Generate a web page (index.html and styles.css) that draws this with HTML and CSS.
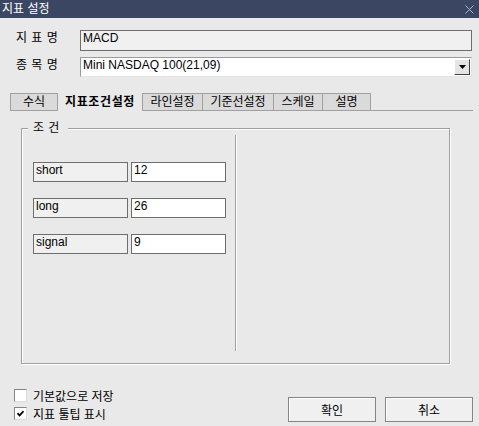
FILE: index.html
```html
<!DOCTYPE html>
<html lang="ko">
<head>
    <meta charset="UTF-8">
    <meta name="viewport" content="width=device-width, initial-scale=1.0">
    <title>지표 설정</title>
    <link rel="stylesheet" href="styles.css">
</head>
<body>
    <div class="dialog">
        <div class="titlebar">
            <span class="title">지표 설정</span>
            <svg class="close" width="9" height="9" viewBox="0 0 9 9">
                <path d="M0.5 0.5 L8.5 8.5 M8.5 0.5 L0.5 8.5" stroke="#aeb6c6" stroke-width="1" fill="none"/>
            </svg>
        </div>

        <div class="field-row first">
            <span class="field-label">지 표 명</span>
            <div class="field-box readonly">MACD</div>
        </div>
        <div class="field-row">
            <span class="field-label">종 목 명</span>
            <div class="field-box select">
                <span>Mini NASDAQ 100(21,09)</span>
                <span class="drop-btn">
                    <svg width="7" height="4" viewBox="0 0 7 4"><path d="M0 0 H7 L3.5 4 Z" fill="#000"/></svg>
                </span>
            </div>
        </div>

        <div class="tabs">
            <div class="tab">수식</div>
            <div class="tab active">지표조건설정</div>
            <div class="tab">라인설정</div>
            <div class="tab">기준선설정</div>
            <div class="tab">스케일</div>
            <div class="tab">설명</div>
            <div class="tab-fill"></div>
        </div>

        <div class="group">
            <div class="group-title">조 건</div>
            <div class="group-body">
                <div class="params">
                    <div class="param">
                        <div class="param-name">short</div>
                        <div class="param-value">12</div>
                    </div>
                    <div class="param">
                        <div class="param-name">long</div>
                        <div class="param-value">26</div>
                    </div>
                    <div class="param">
                        <div class="param-name">signal</div>
                        <div class="param-value">9</div>
                    </div>
                </div>
            </div>
        </div>

        <div class="footer">
            <div class="checks">
                <label class="check"><span class="box"></span>기본값으로 저장</label>
                <label class="check">
                    <span class="box">
                        <svg width="7" height="7" viewBox="0 0 7 7"><path d="M0.5 3.2 L2.6 5.4 L6.5 1.2" stroke="#000" stroke-width="1.7" fill="none"/></svg>
                    </span>지표 툴팁 표시
                </label>
            </div>
            <div class="buttons">
                <button class="btn">확인</button>
                <button class="btn">취소</button>
            </div>
        </div>
    </div>
</body>
</html>
```

FILE: styles.css
```css
body {
    margin: 0;
    background: #e9e9e9;
    font-family: "Liberation Sans", "Noto Sans CJK KR", sans-serif;
    font-size: 12px;
    color: #000;
}
.dialog {
    width: 479px;
    height: 426px;
    display: flex;
    flex-direction: column;
}
.titlebar {
    flex-shrink: 0;
    height: 18px;
    background: #3b4762;
    color: #fff;
    display: flex;
    align-items: center;
    justify-content: space-between;
    padding: 0 5px 0 2px;
}
.title {
    line-height: 18px;
}
.field-row {
    display: flex;
    margin: 6px 7px 0 16px;
}
.field-row.first {
    margin-top: 12px;
}
.field-label {
    width: 64px;
    line-height: 14px;
    padding-top: 1px;
    letter-spacing: 0.5px;
}
.field-box {
    flex: 1;
    box-sizing: border-box;
    height: 21px;
    border: 1px solid #6e6e6e;
    padding: 0 2px;
    line-height: 15px;
}
.readonly {
    background: #f0f0f0;
}
.select {
    height: 20px;
    background: #fff;
    border-color: #9c9c9c #e4e4e4 #e4e4e4 #9c9c9c;
    display: flex;
    justify-content: space-between;
    align-items: flex-start;
    padding-right: 0;
}
.drop-btn {
    box-sizing: border-box;
    width: 16px;
    height: 16px;
    margin: 1px 1px 0 0;
    background: #e4e4e4;
    border: 1px solid;
    border-color: #fff #404040 #404040 #fff;
    display: flex;
    align-items: center;
    justify-content: center;
}
.tabs {
    display: flex;
    margin: 16px 6px 0 10px;
    height: 18px;
}
.tab {
    box-sizing: border-box;
    height: 18px;
    margin-right: -1px;
    border: 1px solid #a0a0a0;
    background: #dadada;
    line-height: 16px;
    text-align: center;
}
.tab:nth-child(1) { width: 48px; }
.tab:nth-child(2) { width: 86px; }
.tab:nth-child(3) { width: 61px; }
.tab:nth-child(4) { width: 72px; }
.tab:nth-child(5) { width: 50px; }
.tab:nth-child(6) { width: 49px; }
.tab.active {
    background: none;
    border-color: transparent;
    border-bottom: none;
    font-weight: bold;
    letter-spacing: 0.6px;
}
.tab-fill {
    flex: 1;
    border-bottom: 1px solid #a0a0a0;
}
.group {
    box-sizing: border-box;
    width: 429px;
    height: 236px;
    margin: 17px 0 0 21px;
    border: 1px solid #a0a0a0;
    box-shadow: 1px 1px 0 #fff, inset 1px 1px 0 #fff;
    display: flex;
    flex-direction: column;
}
.group-title {
    align-self: flex-start;
    margin: -8px 0 0 6px;
    padding: 0 8px 0 5px;
    background: #e9e9e9;
    line-height: 14px;
    height: 14px;
    letter-spacing: 0.5px;
}
.group-body {
    flex: 1;
    display: flex;
    padding-bottom: 12px;
}
.params {
    box-sizing: border-box;
    width: 214px;
    border-right: 1px solid #a0a0a0;
    box-shadow: 1px 0 0 #fff;
    padding: 27px 0 0 11px;
    display: flex;
    flex-direction: column;
    gap: 16px;
}
.param {
    display: flex;
    gap: 3px;
}
.param-name,
.param-value {
    box-sizing: border-box;
    width: 95px;
    height: 20px;
    border: 1px solid #6e6e6e;
    padding: 0 2px;
    line-height: 15px;
}
.param-name {
    background: #f0f0f0;
}
.param-value {
    background: #fff;
}
.footer {
    margin-top: auto;
    display: flex;
    justify-content: space-between;
    align-items: flex-end;
    padding: 0 6px 4px 14px;
}
.check {
    display: flex;
    align-items: center;
    gap: 6px;
    height: 18px;
}
.box {
    box-sizing: border-box;
    width: 13px;
    height: 13px;
    border: 1px solid;
    border-color: #858585 #dcdcdc #dcdcdc #858585;
    background: #fff;
    display: flex;
    align-items: center;
    justify-content: center;
}
.buttons {
    display: flex;
    gap: 9px;
}
.btn {
    width: 88px;
    height: 25px;
    padding: 0;
    font: inherit;
    background: #f0f0f0;
    border: 1px solid #858585;
    box-shadow: inset 1px 1px 0 #fff;
}
```
